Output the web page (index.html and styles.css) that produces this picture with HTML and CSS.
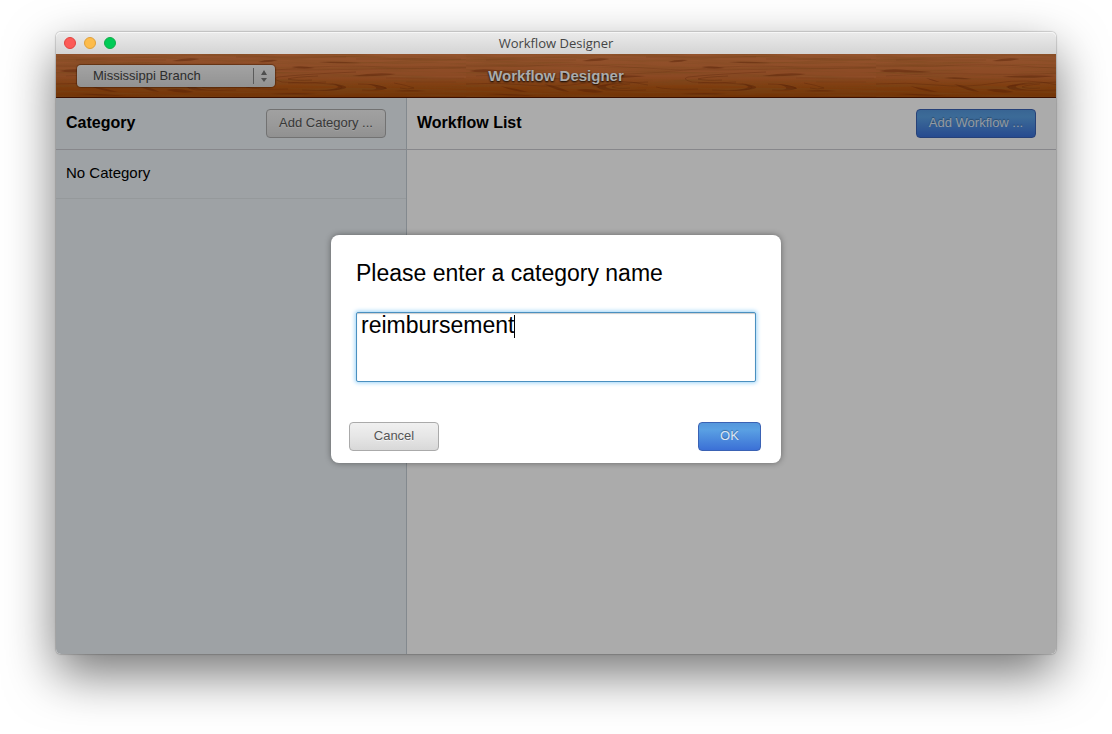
FILE: index.html
```html
<!DOCTYPE html>
<html lang="en">
<head>
<meta charset="utf-8">
<title>Workflow Designer</title>
<link rel="stylesheet" href="styles.css">
</head>
<body>
<div class="window">
  <div class="titlebar">
    <div class="lights">
      <button class="light light-close" type="button" aria-label="Close"></button>
      <button class="light light-min" type="button" aria-label="Minimize"></button>
      <button class="light light-zoom" type="button" aria-label="Zoom"></button>
    </div>
    <span class="titlebar-text">Workflow Designer</span>
  </div>
  <div class="app">
    <header class="toolbar">
      <svg class="wood" aria-hidden="true">
        <defs>
          <linearGradient id="shade" x1="0" y1="0" x2="0" y2="1">
            <stop offset="0" stop-color="#dc7d44"/>
            <stop offset="0.5" stop-color="#d06e36"/>
            <stop offset="0.75" stop-color="#bc5a14"/>
            <stop offset="1" stop-color="#a84d0a"/>
          </linearGradient>
          <filter id="fine" x="0" y="0" width="1" height="1">
            <feTurbulence type="fractalNoise" baseFrequency="0.012 0.38" numOctaves="3" seed="7"/>
            <feColorMatrix values="0 0 0 0 0.42  0 0 0 0 0.14  0 0 0 0 0.02  2.6 0 0 0 -1.1"/>
          </filter>
          <pattern id="grain" width="410" height="44" patternUnits="userSpaceOnUse">
            <rect width="410" height="44" fill="url(#shade)"/>
            <rect width="410" height="44" filter="url(#fine)" opacity="0.55"/>
            <g fill="#7c2c06" fill-opacity="0.42">
              <path d="M3 17Q14 14 31 16Q44 17 56 18Q36 19 22 18Q12 19 3 17Z"/>
              <path d="M50 24Q56 25 64 28Q58 28 50 24Z"/>
              <path d="M68 24Q80 22 96 25Q84 26 68 24Z"/>
              <path d="M34 32Q48 34 62 38Q48 38 34 32Z"/>
              <path d="M78 30Q92 32 104 38Q90 37 78 30Z"/>
              <path d="M110 36Q122 33 138 38Q124 40 110 36Z"/>
              <path d="M126 23Q145 20 180 22Q158 25 126 23Z"/>
              <path d="M116 7Q130 3 144 5Q132 8 116 7Z"/>
              <path d="M202 8Q210 5 222 6Q214 9 202 8Z"/>
              <path d="M262 8Q280 7 306 9Q280 10 262 8Z"/>
              <path d="M235 13Q246 11 259 14Q246 16 235 13Z"/>
              <path d="M296 22Q318 18 340 20Q326 23 296 22Z"/>
              <path d="M338 37Q354 35 370 37Q354 38 338 37Z"/>
              <path d="M214 40Q240 38 262 40Q238 41 214 40Z"/>
              <path d="M20 40Q40 39 70 42Q44 42 20 40Z"/>
              <path d="M272 29Q292 31 290 34Q284 37 262 37Q280 35 282 33Q282 31 272 29Z"/>
              <path d="M312 30Q332 32 331 35L316 36Q326 34 312 30Z"/>
              <path d="M160 28Q132 30 130 33Q134 36 152 36Q138 34 140 32Q144 30 160 28Z"/>
            </g>
            <g fill="none" stroke="#7c2c06" stroke-opacity="0.3">
              <path d="M182 28Q160 28 134 32Q128 34 140 36Q160 37 180 36"/>
              <path d="M164 30Q150 31 146 33Q152 35 164 34"/>
              <path d="M300 18Q250 20 222 23Q215 25 226 28Q250 30 270 28"/>
              <path d="M262 22Q238 23 232 25Q240 27 256 26"/>
              <path d="M232 29Q262 28 280 31Q294 34 276 36Q260 37 246 36"/>
              <path d="M302 30Q320 30 330 34Q326 37 306 36"/>
              <path d="M338 29Q350 31 358 34Q352 36 344 34"/>
              <path d="M0 30Q30 28 60 31T120 29T182 31"/>
              <path d="M190 33Q200 36 232 35"/>
            </g>
            <g fill="none" stroke="#8c3a10" stroke-opacity="0.22">
              <path d="M0 12H60Q110 9 160 13T260 16T410 14"/>
              <path d="M10 22Q60 18 110 20T220 16T330 13H410"/>
              <path d="M180 3H290M300 5H405M20 6H110M330 24H408M350 28H400"/>
            </g>
            <path d="M318 21Q350 23 410 22V24Q350 25 318 21Z" fill="#e58d55" fill-opacity="0.2"/>
          </pattern>
        </defs>
        <rect width="100%" height="44" fill="url(#grain)"/>
      </svg>
      <div class="branch">
        <select class="branch-select" aria-label="Branch">
          <option>Mississippi Branch</option>
        </select>
        <svg class="branch-arrows" width="22" height="22" viewBox="0 0 22 22" aria-hidden="true">
          <path d="M.5 3v16" stroke="#888"/>
          <path d="M11 5l3 5H8zM11 17l3-4H8z" fill="#777"/>
        </svg>
      </div>
      <h1 class="toolbar-title">Workflow Designer</h1>
    </header>
    <div class="columns">
      <aside class="sidebar">
        <div class="pane-head">
          <h2 class="pane-title">Category</h2>
          <button class="btn btn-wide" type="button">Add Category ...</button>
        </div>
        <ul class="categories">
          <li class="category">No Category</li>
        </ul>
      </aside>
      <main class="main">
        <div class="pane-head">
          <h2 class="pane-title">Workflow List</h2>
          <button class="btn btn-blue btn-wide" type="button">Add Workflow ...</button>
        </div>
      </main>
    </div>
    <div class="overlay">
      <form class="dialog" role="dialog" aria-labelledby="name-label">
        <label class="dialog-title" id="name-label" for="name">Please enter a category name</label>
        <div class="field">
          <textarea class="field-input" id="name" spellcheck="false">reimbursement</textarea>
          <span class="caret"></span>
        </div>
        <div class="actions">
          <button class="btn btn-cancel" type="button">Cancel</button>
          <button class="btn btn-blue btn-ok" type="button">OK</button>
        </div>
      </form>
    </div>
  </div>
</div>
</body>
</html>
```
FILE: styles.css
```css
* {
  box-sizing: border-box;
}

body {
  margin: 0;
  min-height: 100vh;
  padding: 32px 56px 80px;
  display: flex;
  background: #fff;
  color: #000;
  font-family: "Liberation Sans", Arial, sans-serif;
  overflow: hidden;
}

.window {
  flex: 1;
  display: flex;
  flex-direction: column;
  border-radius: 5px;
  box-shadow: 0 0 1px 1px rgba(0, 0, 0, 0.16), 0 20px 50px rgba(0, 0, 0, 0.54);
}

.titlebar {
  position: relative;
  height: 22px;
  padding: 0 8px;
  display: flex;
  align-items: center;
  justify-content: center;
  border-radius: 5px 5px 0 0;
  background: linear-gradient(#ebebeb, #d4d4d4);
  box-shadow: inset 0 1px #f6f6f6;
}

.titlebar-text {
  font-family: "Open Sans", sans-serif;
  font-size: 13px;
  line-height: 22px;
  color: #454545;
}

.lights {
  position: absolute;
  left: 8px;
  top: 5px;
  display: flex;
  gap: 8px;
}

.light {
  width: 12px;
  height: 12px;
  padding: 0;
  border: 1px solid;
  border-radius: 50%;
}

.light-close {
  background: #fc5b57;
  border-color: #e2443f;
}

.light-min {
  background: #fdbc4b;
  border-color: #e0a03a;
}

.light-zoom {
  background: #00cb56;
  border-color: #12ac48;
}

.app {
  position: relative;
  flex: 1;
  display: flex;
  flex-direction: column;
  border-radius: 0 0 5px 5px;
  overflow: hidden;
}

.toolbar {
  position: relative;
  height: 44px;
  padding: 0 21px;
  display: flex;
  align-items: center;
  justify-content: center;
  border-bottom: 1px solid #5c1800;
}

.wood {
  position: absolute;
  inset: 0;
  width: 100%;
  height: 100%;
}

.branch {
  position: absolute;
  left: 21px;
  top: 11px;
  width: 198px;
  height: 22px;
}

.branch-select {
  width: 100%;
  height: 100%;
  padding: 0 16px 2px;
  appearance: none;
  border: 0;
  border-radius: 4px;
  background: linear-gradient(#f4f4f4, #dadada);
  box-shadow: 0 0 1px 1px rgba(80, 30, 0, 0.45);
  color: #444;
  font: 13px "Liberation Sans", Arial, sans-serif;
}

.branch-arrows {
  position: absolute;
  right: 0;
  top: 0;
  pointer-events: none;
}

.toolbar-title {
  position: relative;
  margin: 0;
  color: #fff;
  font-size: 15px;
  line-height: 20px;
  text-shadow: 0 1px 2px #000;
}

.columns {
  flex: 1;
  display: flex;
}

.sidebar {
  flex: 0 0 351px;
  background: #ecf2f6;
  border-right: 1px solid #c4ccd4;
}

.main {
  flex: 1;
  background: #fff;
}

.pane-head {
  height: 52px;
  padding: 0 20px 0 10px;
  display: flex;
  align-items: center;
  justify-content: space-between;
  border-bottom: 1px solid #cacad0;
}

.pane-title {
  margin: 0;
  padding-bottom: 2px;
  font-size: 16px;
  line-height: 20px;
}

.categories {
  margin: 0;
  padding: 0;
  list-style: none;
}

.category {
  height: 49px;
  padding: 0 10px;
  border-bottom: 1px solid #dfe4e8;
  font-size: 15px;
  line-height: 45px;
}

.btn {
  height: 29px;
  padding: 0 0 2px;
  border: 1px solid #aaa;
  border-radius: 4px;
  background: linear-gradient(#f0f0f0, #e6e6e6 50%, #d8d8d8);
  color: #555;
  font: 13px "Liberation Sans", Arial, sans-serif;
  text-shadow: 0 1px rgba(255, 255, 255, 0.6);
}

.btn-wide {
  width: 120px;
}

.btn-blue {
  border-color: #3a62b4;
  background: linear-gradient(#5597dc, #5aa0e3 25%, #3b70d6);
  color: #dce6f4;
  text-shadow: 0 -1px 1px rgba(0, 0, 0, 0.3);
}

.overlay {
  position: absolute;
  inset: 0;
  padding-bottom: 10px;
  display: flex;
  align-items: center;
  justify-content: center;
  background: rgba(0, 0, 0, 0.33);
}

.dialog {
  width: 450px;
  padding: 24px 0 12px;
  display: flex;
  flex-direction: column;
  border-radius: 8px;
  background: #fff;
  box-shadow: 0 0 6px rgba(0, 0, 0, 0.4);
}

.dialog-title {
  padding: 0 25px;
  font-size: 23px;
  line-height: 28px;
}

.field {
  position: relative;
  margin: 25px 25px 40px;
}

.field-input {
  display: block;
  width: 100%;
  height: 70px;
  padding: 0 4px;
  border: 1px solid #4a90c0;
  border-radius: 2px;
  outline: none;
  resize: none;
  background: #fff;
  box-shadow: 0 0 4px 1px #9bd3f8, inset 0 1px 1px #ccc;
  color: #000;
  caret-color: transparent;
  font: 23px/24px "Liberation Sans", Arial, sans-serif;
}

.caret {
  position: absolute;
  left: 158px;
  top: 3px;
  width: 1px;
  height: 23px;
  background: #000;
}

.actions {
  padding: 0 20px 0 18px;
  display: flex;
  justify-content: space-between;
}

.btn-cancel {
  width: 90px;
}

.btn-ok {
  width: 63px;
}
```
